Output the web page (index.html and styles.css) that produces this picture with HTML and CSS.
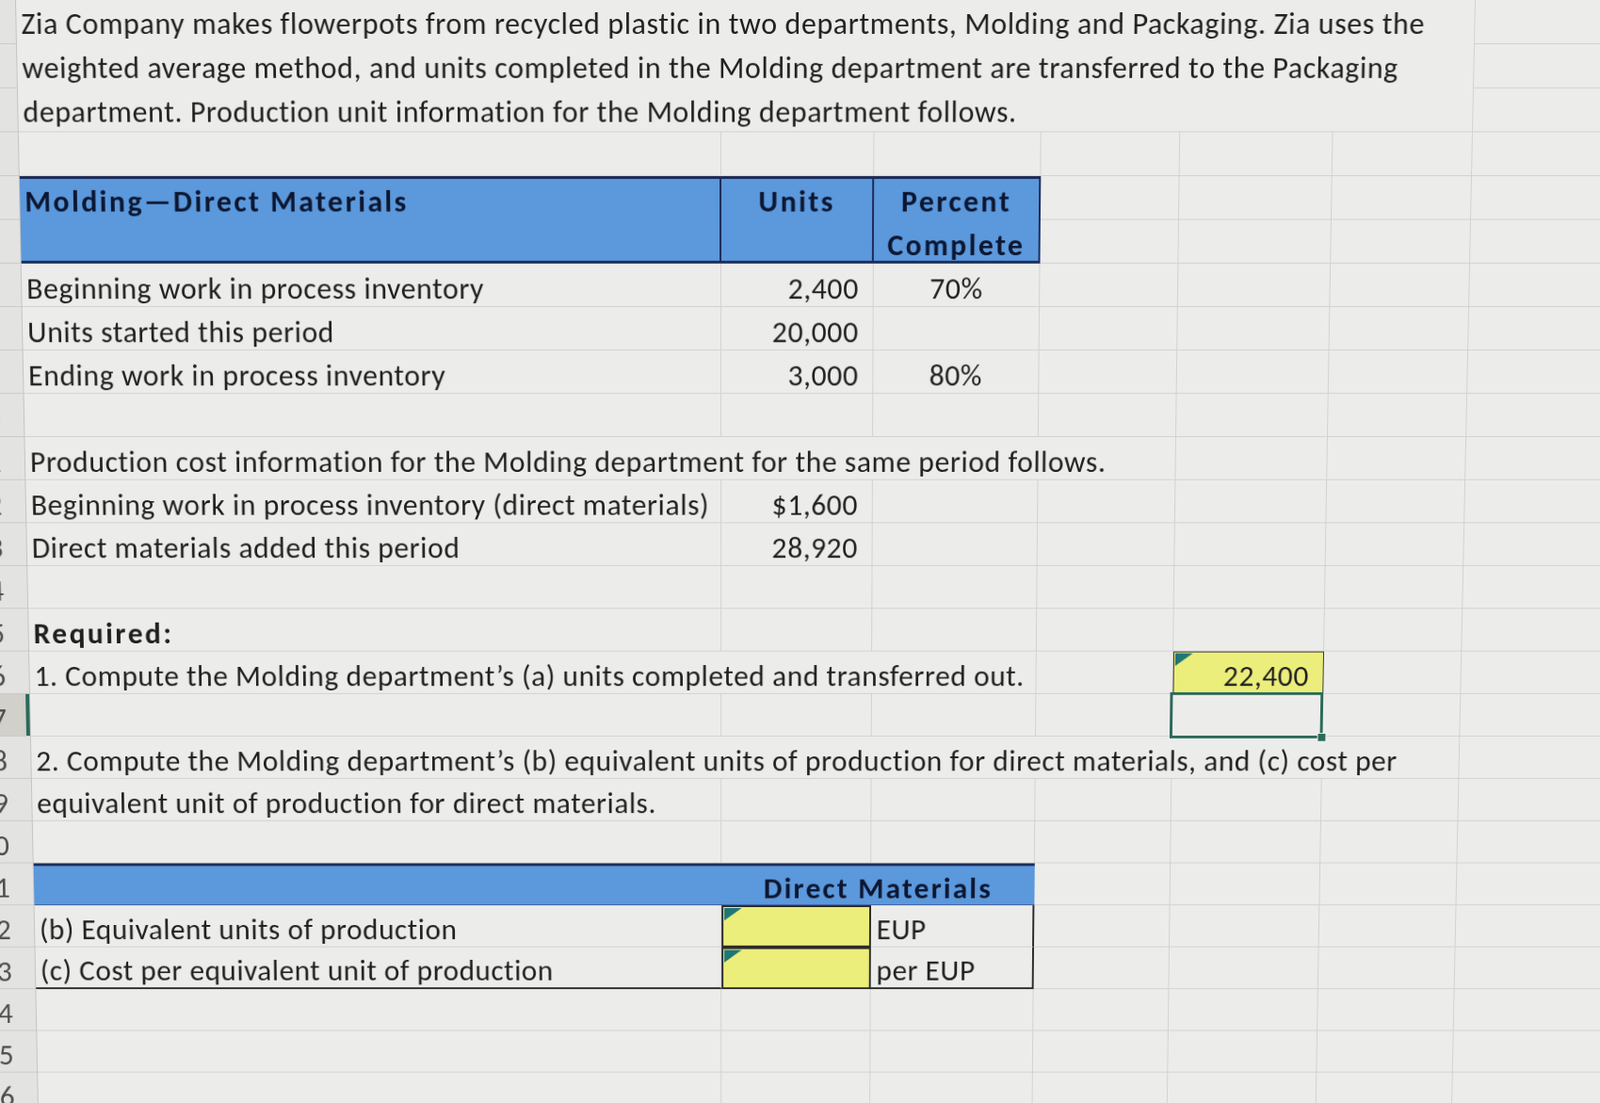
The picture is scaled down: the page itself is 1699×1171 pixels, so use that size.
FILE: index.html
```html
<!DOCTYPE html>
<html lang="en">
<head>
<meta charset="utf-8">
<title>Zia Company – Molding department</title>
<link rel="stylesheet" href="styles.css">
</head>
<body>
<div class="sheet">
  <!-- rows 1-3 -->
  <div class="c hd">1</div>
  <div class="c para">Zia Company makes flowerpots from recycled plastic in two departments, Molding and Packaging. Zia uses the<br>weighted average method, and units completed in the Molding department are transferred to the Packaging<br>department. Production unit information for the Molding department follows.</div>
  <div class="c"></div><div class="c"></div>
  <div class="c hd">2</div><div class="c"></div><div class="c"></div>
  <div class="c hd">3</div><div class="c"></div><div class="c"></div>
  <!-- row 4 -->
  <div class="c hd">4</div><div class="c"></div><div class="c"></div><div class="c"></div><div class="c"></div><div class="c"></div><div class="c"></div><div class="c"></div><div class="c"></div>
  <!-- rows 5-6 table header -->
  <div class="c hd">5</div>
  <div class="c th th-tall">Molding—Direct Materials</div>
  <div class="c th th-tall center">Units</div>
  <div class="c th th-top center">Percent</div>
  <div class="c"></div><div class="c"></div><div class="c"></div><div class="c"></div><div class="c"></div>
  <div class="c hd">6</div>
  <div class="c th th-bottom center">Complete</div>
  <div class="c"></div><div class="c"></div><div class="c"></div><div class="c"></div><div class="c"></div>
  <!-- row 7 -->
  <div class="c hd">7</div>
  <div class="c">Beginning work in process inventory</div>
  <div class="c num">2,400</div>
  <div class="c center">70%</div>
  <div class="c"></div><div class="c"></div><div class="c"></div><div class="c"></div><div class="c"></div>
  <!-- row 8 -->
  <div class="c hd">8</div>
  <div class="c">Units started this period</div>
  <div class="c num">20,000</div>
  <div class="c"></div>
  <div class="c"></div><div class="c"></div><div class="c"></div><div class="c"></div><div class="c"></div>
  <!-- row 9 -->
  <div class="c hd">9</div>
  <div class="c">Ending work in process inventory</div>
  <div class="c num">3,000</div>
  <div class="c center">80%</div>
  <div class="c"></div><div class="c"></div><div class="c"></div><div class="c"></div><div class="c"></div>
  <!-- row 10 -->
  <div class="c hd">10</div><div class="c"></div><div class="c"></div><div class="c"></div><div class="c"></div><div class="c"></div><div class="c"></div><div class="c"></div><div class="c"></div>
  <!-- row 11 -->
  <div class="c hd">11</div>
  <div class="c s4">Production cost information for the Molding department for the same period follows.</div>
  <div class="c"></div><div class="c"></div><div class="c"></div><div class="c"></div>
  <!-- row 12 -->
  <div class="c hd">12</div>
  <div class="c">Beginning work in process inventory (direct materials)</div>
  <div class="c num">$1,600</div>
  <div class="c"></div><div class="c"></div><div class="c"></div><div class="c"></div><div class="c"></div><div class="c"></div>
  <!-- row 13 -->
  <div class="c hd">13</div>
  <div class="c">Direct materials added this period</div>
  <div class="c num">28,920</div>
  <div class="c"></div><div class="c"></div><div class="c"></div><div class="c"></div><div class="c"></div><div class="c"></div>
  <!-- row 14 -->
  <div class="c hd">14</div><div class="c"></div><div class="c"></div><div class="c"></div><div class="c"></div><div class="c"></div><div class="c"></div><div class="c"></div><div class="c"></div>
  <!-- row 15 -->
  <div class="c hd">15</div>
  <div class="c bold">Required:</div>
  <div class="c"></div><div class="c"></div><div class="c"></div><div class="c"></div><div class="c"></div><div class="c"></div><div class="c"></div>
  <!-- row 16 -->
  <div class="c hd">16</div>
  <div class="c s3">1. Compute the Molding department’s (a) units completed and transferred out.</div>
  <div class="c"></div>
  <div class="c num input flag">22,400</div>
  <div class="c"></div><div class="c"></div><div class="c"></div>
  <!-- row 17 -->
  <div class="c hd hd-active">17</div>
  <div class="c"></div><div class="c"></div><div class="c"></div><div class="c"></div>
  <div class="c selected"></div>
  <div class="c"></div><div class="c"></div><div class="c"></div>
  <!-- row 18 -->
  <div class="c hd">18</div>
  <div class="c s6">2. Compute the Molding department’s (b) equivalent units of production for direct materials, and (c) cost per</div>
  <div class="c"></div><div class="c"></div>
  <!-- row 19 -->
  <div class="c hd">19</div>
  <div class="c">equivalent unit of production for direct materials.</div>
  <div class="c"></div><div class="c"></div><div class="c"></div><div class="c"></div><div class="c"></div><div class="c"></div><div class="c"></div>
  <!-- row 20 -->
  <div class="c hd">20</div><div class="c"></div><div class="c"></div><div class="c"></div><div class="c"></div><div class="c"></div><div class="c"></div><div class="c"></div><div class="c"></div>
  <!-- row 21 -->
  <div class="c hd">21</div>
  <div class="c th2"></div>
  <div class="c th2 s2 center">Direct Materials</div>
  <div class="c"></div><div class="c"></div><div class="c"></div><div class="c"></div><div class="c"></div>
  <!-- row 22 -->
  <div class="c hd">22</div>
  <div class="c">(b) Equivalent units of production</div>
  <div class="c input box flag"></div>
  <div class="c unit">EUP</div>
  <div class="c"></div><div class="c"></div><div class="c"></div><div class="c"></div><div class="c"></div>
  <!-- row 23 -->
  <div class="c hd">23</div>
  <div class="c last">(c) Cost per equivalent unit of production</div>
  <div class="c input box flag last"></div>
  <div class="c unit last">per EUP</div>
  <div class="c"></div><div class="c"></div><div class="c"></div><div class="c"></div><div class="c"></div>
  <!-- rows 24-27 -->
  <div class="c hd">24</div><div class="c"></div><div class="c"></div><div class="c"></div><div class="c"></div><div class="c"></div><div class="c"></div><div class="c"></div><div class="c"></div>
  <div class="c hd">25</div><div class="c"></div><div class="c"></div><div class="c"></div><div class="c"></div><div class="c"></div><div class="c"></div><div class="c"></div><div class="c"></div>
  <div class="c hd">26</div><div class="c"></div><div class="c"></div><div class="c"></div><div class="c"></div><div class="c"></div><div class="c"></div><div class="c"></div><div class="c"></div>
  <div class="c hd">27</div><div class="c"></div><div class="c"></div><div class="c"></div><div class="c"></div><div class="c"></div><div class="c"></div><div class="c"></div><div class="c"></div>
</div>
</body>
</html>
```

FILE: styles.css
```css
html, body {
  margin: 0;
  padding: 0;
  height: 100%;
  overflow: hidden;
  background: #ebebea;
}

body {
  font-family: "Carlito", "Lato", "Liberation Sans", sans-serif;
  font-size: 32px;
  letter-spacing: 0.6px;
  color: #1f1f1f;
}

/* the photographed sheet: seen slightly from below, so it narrows towards the bottom */
.sheet {
  display: grid;
  grid-template-columns: 70px 749px 163px 178px 148px 163px 149px 200px 200px;
  grid-auto-rows: 47px;
  width: 2020px;
  margin-left: -53px;
  transform-origin: 827px 0;
  transform: perspective(1000px) rotateX(-1.54deg);
  background: #ececeb;
}

.c {
  box-sizing: border-box;
  border-right: 1px solid #d2d2d1;
  border-bottom: 1px solid #d2d2d1;
  padding: 8px 5px 0;
  display: flex;
  align-items: center;
  white-space: nowrap;
  min-width: 0;
  position: relative;
}

.hd {
  background: #e3e3e2;
  justify-content: flex-end;
  padding-right: 25px;
  letter-spacing: 0;
  color: #4d4d4d;
  border-right: 1px solid #c4c4c3;
  border-bottom: 1px solid #cacac9;
}

.hd-active {
  background: #d1d0cb;
  box-shadow: inset -4px 0 0 #2a6a58;
}

.para {
  grid-column: span 6;
  grid-row: span 3;
  display: block;
  line-height: 47px;
  padding: 2px 0 0 5px;
}

.s2 { grid-column: span 2; }
.s3 { grid-column: span 3; }
.s4 { grid-column: span 4; }
.s6 { grid-column: span 6; }

.center { justify-content: center; }

.bold {
  font-weight: 700;
  letter-spacing: 2.5px;
}

.num {
  justify-content: flex-end;
  padding-right: 15px;
}

/* top table header */
.th {
  background: #5b98dc;
  color: #0d1731;
  font-weight: 700;
  letter-spacing: 2.4px;
  border-top: 3px solid #1d2d5a;
  border-right: 2px solid #1d2d5a;
  border-bottom: 3px solid #1d2d5a;
  align-items: flex-start;
  padding-top: 2px;
  line-height: 46px;
}

.th-tall { grid-row: span 2; }

.th-top {
  border-bottom: none;
}

.th-bottom {
  border-top: none;
  padding-top: 3px;
  line-height: 50px;
}

/* lower table header */
.th2 {
  background: #5b98dc;
  color: #0d1731;
  font-weight: 700;
  letter-spacing: 2.3px;
  border-top: 3px solid #1d2d5a;
  border-right: none;
  border-bottom: 1px solid #3d5f98;
}

.input {
  background: #ecee7b;
  border: 1.5px solid #393636;
}

.box {
  border: 2px solid #2c2a2a;
}

.flag::before {
  content: "";
  position: absolute;
  left: 1px;
  top: 1px;
  border-style: solid;
  border-width: 14px 19px 0 0;
  border-color: #1f7775 transparent transparent transparent;
}

.unit {
  padding-left: 6px;
  border-right: 2px solid #2c2a2a;
}

.last {
  border-bottom: 2px solid #2c2a2a;
}

.selected::after {
  content: "";
  position: absolute;
  left: -3px;
  top: -2px;
  right: -1px;
  bottom: -3px;
  border: 3px solid #2a6a58;
}

.selected::before {
  content: "";
  position: absolute;
  right: -5px;
  bottom: -7px;
  width: 8px;
  height: 8px;
  background: #2a6a58;
  border: 1px solid #ececeb;
  z-index: 1;
}
```
